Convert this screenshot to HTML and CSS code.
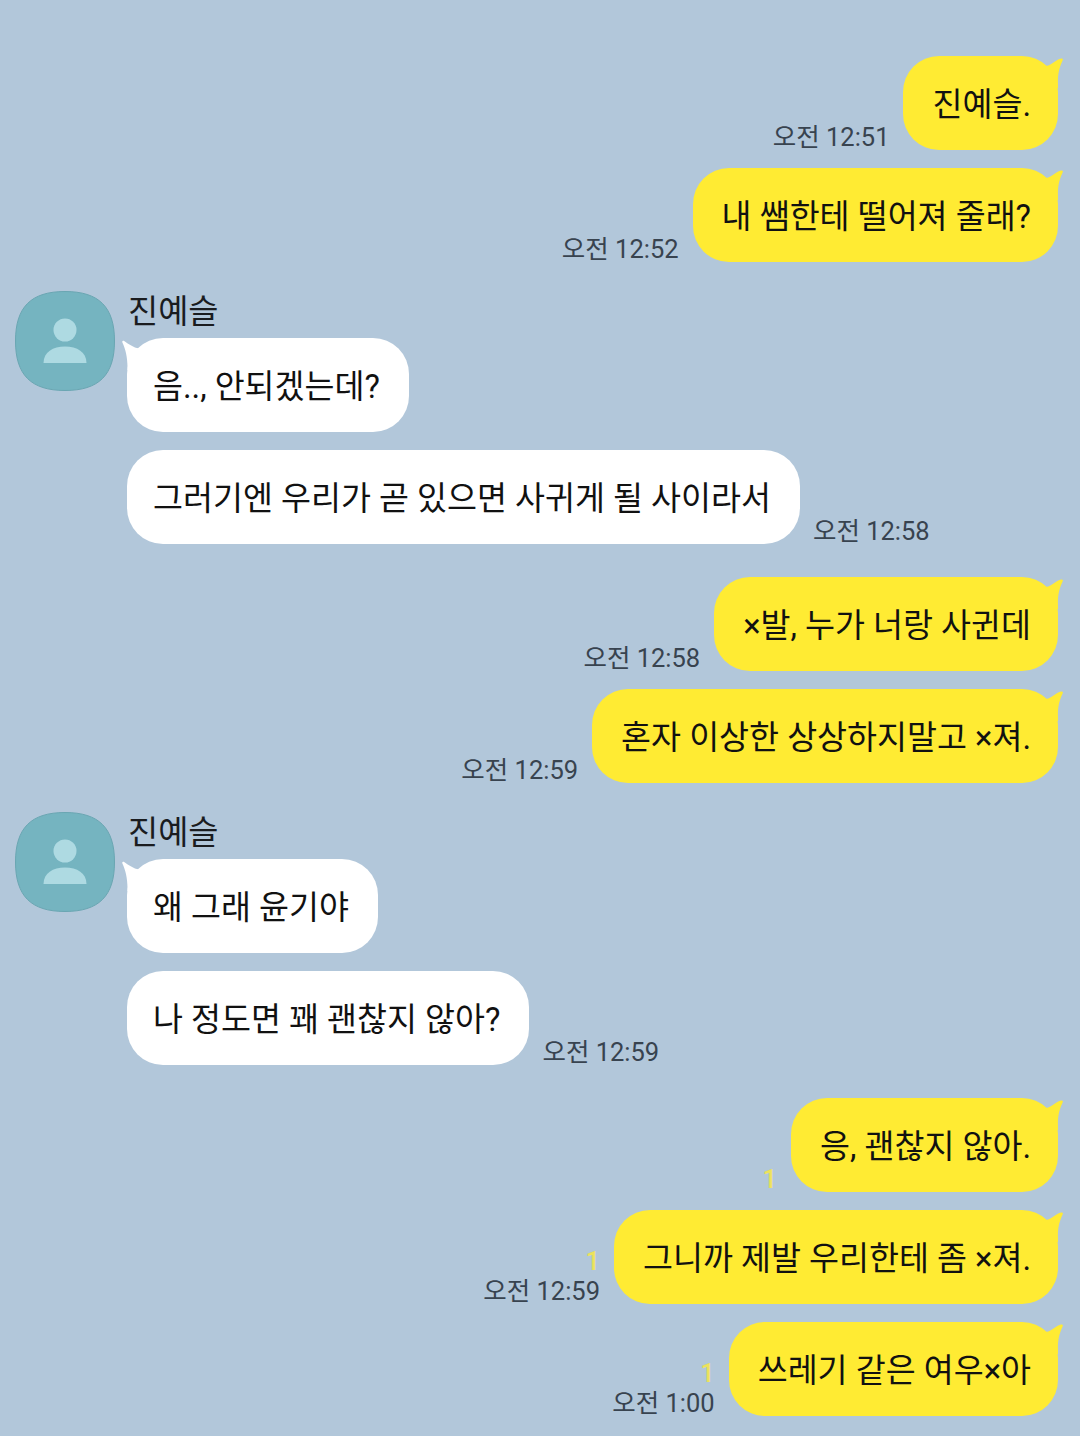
FILE: index.html
```html
<!DOCTYPE html>
<html lang="ko">
<head>
    <meta charset="UTF-8">
    <meta name="viewport" content="width=device-width, initial-scale=1.0">
    <title>진예슬</title>
    <link rel="stylesheet" href="styles.css">
</head>
<body>
    <svg class="defs" width="0" height="0">
        <defs>
            <symbol id="tail-right" viewBox="0 0 30 30">
                <path d="M10 8.5 C14 8 17 7 19 5.5 C22 3.5 25 1.5 28 .6 C29.6 .2 30.2 1 29.6 2.4 C26.5 9 24.5 16 25 26 L25 30 L10 30 Z"/>
            </symbol>
            <symbol id="tail-left" viewBox="0 0 30 30">
                <path d="M17 8.5 C11.5 7.5 6.5 4 2.5 1.2 C1 .2 -.2 1 .4 2.4 C3.5 9 5.5 17 5.5 27 L5.5 30 L17 30 Z"/>
            </symbol>
            <symbol id="face" viewBox="0 0 100 100">
                <path class="face-bg" d="M50 0.5 C84 0.5 99.5 16 99.5 50 C99.5 84 84 99.5 50 99.5 C16 99.5 0.5 84 0.5 50 C0.5 16 16 0.5 50 0.5 Z"/>
                <circle class="face-fg" cx="50" cy="39" r="11.5"/>
                <path class="face-fg" d="M28.5 72 C28.5 61 38 55.5 50 55.5 C62 55.5 71.5 61 71.5 72 Z"/>
            </symbol>
        </defs>
    </svg>

    <div id="chat">
        <div class="group">
            <div class="row mine">
                <div class="meta"><span class="time">오전 12:51</span></div>
                <div class="bubble yellow"><svg class="tail"><use href="#tail-right"/></svg>진예슬.</div>
            </div>
            <div class="row mine">
                <div class="meta"><span class="time">오전 12:52</span></div>
                <div class="bubble yellow"><svg class="tail"><use href="#tail-right"/></svg>내 쌤한테 떨어져 줄래?</div>
            </div>
        </div>

        <div class="group other">
            <svg class="avatar"><use href="#face"/></svg>
            <div class="stack">
                <div class="name">진예슬</div>
                <div class="row">
                    <div class="bubble white"><svg class="tail"><use href="#tail-left"/></svg>음.., 안되겠는데?</div>
                </div>
                <div class="row">
                    <div class="bubble white">그러기엔 우리가 곧 있으면 사귀게 될 사이라서</div>
                    <div class="meta"><span class="time">오전 12:58</span></div>
                </div>
            </div>
        </div>

        <div class="group">
            <div class="row mine">
                <div class="meta"><span class="time">오전 12:58</span></div>
                <div class="bubble yellow"><svg class="tail"><use href="#tail-right"/></svg>×발, 누가 너랑 사귄데</div>
            </div>
            <div class="row mine">
                <div class="meta"><span class="time">오전 12:59</span></div>
                <div class="bubble yellow"><svg class="tail"><use href="#tail-right"/></svg>혼자 이상한 상상하지말고 ×져.</div>
            </div>
        </div>

        <div class="group other">
            <svg class="avatar"><use href="#face"/></svg>
            <div class="stack">
                <div class="name">진예슬</div>
                <div class="row">
                    <div class="bubble white"><svg class="tail"><use href="#tail-left"/></svg>왜 그래 윤기야</div>
                </div>
                <div class="row">
                    <div class="bubble white">나 정도면 꽤 괜찮지 않아?</div>
                    <div class="meta"><span class="time">오전 12:59</span></div>
                </div>
            </div>
        </div>

        <div class="group">
            <div class="row mine">
                <div class="meta"><span class="unread">1</span></div>
                <div class="bubble yellow"><svg class="tail"><use href="#tail-right"/></svg>응, 괜찮지 않아.</div>
            </div>
            <div class="row mine">
                <div class="meta"><span class="unread">1</span><span class="time">오전 12:59</span></div>
                <div class="bubble yellow"><svg class="tail"><use href="#tail-right"/></svg>그니까 제발 우리한테 좀 ×져.</div>
            </div>
            <div class="row mine">
                <div class="meta"><span class="unread">1</span><span class="time">오전 1:00</span></div>
                <div class="bubble yellow"><svg class="tail"><use href="#tail-right"/></svg>쓰레기 같은 여우×아</div>
            </div>
        </div>
    </div>
</body>
</html>
```

FILE: styles.css
```css
* {
    margin: 0;
    padding: 0;
    box-sizing: border-box;
}
body {
    font-family: 'Roboto', 'Noto Sans CJK KR', sans-serif;
    background-color: #b2c7da;
    color: #111111;
    height: 1436px;
    overflow: hidden;
}
.defs {
    position: absolute;
}
#chat {
    display: flex;
    flex-direction: column;
    gap: 29px;
    padding: 56px 22px 0 15px;
}
.group {
    display: flex;
    flex-direction: column;
    gap: 18px;
}
.group.other {
    flex-direction: row;
    gap: 12px;
    align-items: flex-start;
    margin-bottom: 4px;
}
.stack {
    display: flex;
    flex-direction: column;
    gap: 18px;
}
.avatar {
    width: 100px;
    height: 100px;
    flex-shrink: 0;
}
.face-bg {
    fill: #75b4c0;
    stroke: #6aa6b2;
    stroke-width: 1;
}
.face-fg {
    fill: #aedae2;
}
.name {
    font-size: 32.8px;
    line-height: 43px;
    height: 29px;
    padding-left: 1px;
    color: #1a1c1f;
}
/* Rows */
.row {
    display: flex;
    align-items: flex-end;
    gap: 13px;
}
.row.mine {
    justify-content: flex-end;
    gap: 14px;
}
.bubble {
    position: relative;
    height: 94px;
    display: flex;
    align-items: center;
    padding: 0 29px 4px 26px;
    border-radius: 36px;
    font-size: 32.6px;
    white-space: nowrap;
}
.bubble.yellow {
    background-color: #ffeb33;
    padding: 0 27px 4px 29px;
}
.bubble.white {
    background-color: #ffffff;
}
.tail {
    position: absolute;
    top: 2px;
    width: 30px;
    height: 30px;
}
.yellow .tail {
    right: -5px;
    fill: #ffeb33;
}
.white .tail {
    left: -5px;
    fill: #ffffff;
}
/* Time and unread count */
.meta {
    display: flex;
    flex-direction: column;
    align-items: flex-end;
    margin-bottom: -2px;
}
.time {
    font-size: 25.5px;
    line-height: 30px;
    color: #38434f;
}
.unread {
    font-size: 25.5px;
    font-weight: 500;
    line-height: 30px;
    color: #ece25c;
}
```
